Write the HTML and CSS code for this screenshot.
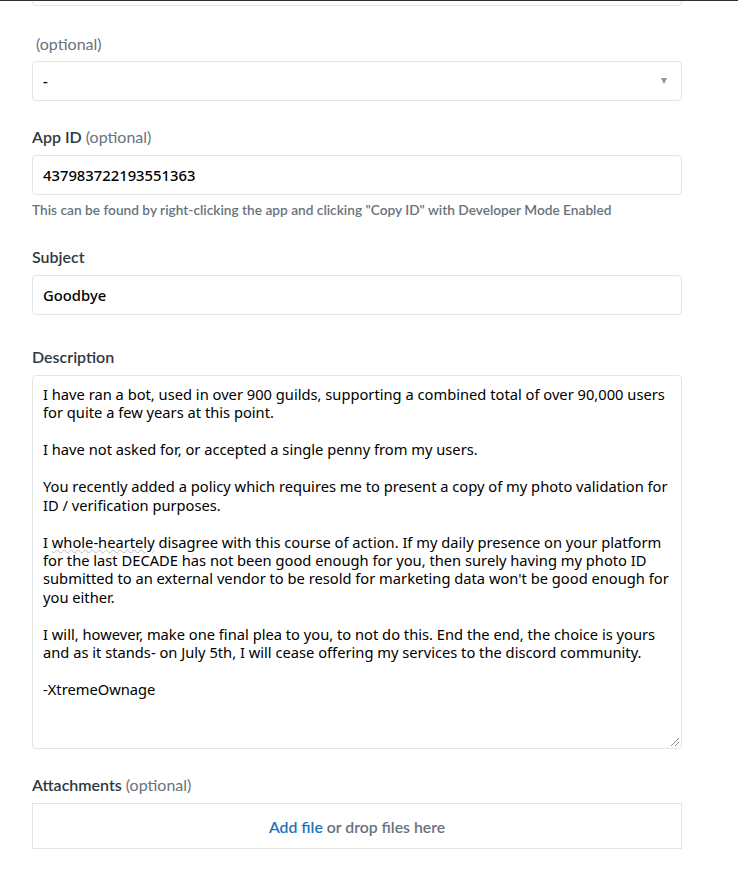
FILE: index.html
```html
<!DOCTYPE html>
<html>
<head>
<meta charset="utf-8">
<link rel="stylesheet" href="styles.css">
</head>
<body>
<div class="topline"></div>
<form class="form">
  <div class="input partial"></div>

  <label class="label first">&nbsp;<span class="opt">(optional)</span></label>
  <div class="input select">
    <span class="value">-</span>
    <span class="caret"></span>
  </div>

  <label class="label">App ID <span class="opt">(optional)</span></label>
  <div class="input"><span class="value">437983722193551363</span></div>
  <p class="hint">This can be found by right-clicking the app and clicking "Copy ID" with Developer Mode Enabled</p>

  <label class="label after-hint">Subject</label>
  <div class="input"><span class="value">Goodbye</span></div>

  <label class="label desc-label">Description</label>
  <div class="textarea">
    <div class="text">I have ran a bot, used in over 900 guilds, supporting a combined total of over 90,000 users
for quite a few years at this point.

I have not asked for, or accepted a single penny from my users.

You recently added a policy which requires me to present a copy of my photo validation for
ID / verification purposes.

I <span class="spell">whole-heartely</span> disagree with this course of action. If my daily presence on your platform
for the last DECADE has not been good enough for you, then surely having my photo ID
submitted to an external vendor to be resold for marketing data won't be good enough for
you either.

I will, however, make one final plea to you, to not do this. End the end, the choice is yours
and as it stands- on July 5th, I will cease offering my services to the discord community.

-XtremeOwnage</div>
    <span class="grip"></span>
  </div>

  <label class="label att-label">Attachments <span class="opt">(optional)</span></label>
  <div class="drop"><span class="add">Add file</span> or drop files here</div>
</form>
</body>
</html>
```

FILE: styles.css
```css
html, body {
  margin: 0;
  padding: 0;
  background: #ffffff;
}
body {
  font-family: Lato, "Noto Sans", sans-serif;
  color: #2f3941;
  overflow: hidden;
  height: 880px;
}
.topline {
  position: fixed;
  top: 0;
  left: 0;
  right: 0;
  height: 1px;
  background: #2f2f2f;
  z-index: 5;
}
.form {
  display: flex;
  flex-direction: column;
  width: 650px;
  margin: 0 0 0 32px;
}
.input {
  box-sizing: border-box;
  height: 40px;
  border: 1px solid #e2e5e7;
  border-radius: 4px;
  display: flex;
  align-items: center;
  padding: 0 10px;
  font-family: "Noto Sans", sans-serif;
  font-size: 14.8px;
  font-weight: 500;
  color: #000;
}
.partial {
  margin-top: -34px;
}
.label {
  display: block;
  font-size: 16px;
  line-height: 20px;
  font-weight: 600;
  color: #2f3941;
  margin-top: 26px;
  margin-bottom: 8px;
}
.label.first {
  margin-top: 28px;
  margin-bottom: 7px;
}
.opt {
  font-weight: 400;
  color: #68737d;
}
.select {
  justify-content: space-between;
}
.caret {
  width: 0;
  height: 0;
  border-left: 3.5px solid transparent;
  border-right: 3.5px solid transparent;
  border-top: 6px solid #8c96a0;
  margin-right: 4px;
}
.hint {
  margin: 6px 0 0;
  font-size: 13.7px;
  line-height: 18px;
  color: #68737d;
  font-weight: 600;
}
.label.after-hint {
  margin-top: 28px;
}
.label.desc-label {
  margin-top: 32px;
}
.textarea {
  position: relative;
  box-sizing: border-box;
  height: 374px;
  border: 1px solid #e2e5e7;
  border-radius: 4px;
  padding: 9px 10px 10px;
}
.text {
  white-space: pre;
  font-family: "Noto Sans", sans-serif;
  font-size: 14.7px;
  line-height: 18.44px;
  color: #000;
}
.spell {
  text-decoration: underline wavy #b9bec3;
  text-decoration-thickness: 1px;
  text-underline-offset: 1px;
}
.grip {
  position: absolute;
  right: 2px;
  bottom: 2px;
  width: 8px;
  height: 8px;
  background:
    linear-gradient(135deg, transparent 45%, #8a8a8a 45%, #8a8a8a 55%, transparent 55%, transparent 70%, #8a8a8a 70%, #8a8a8a 80%, transparent 80%);
}
.label.att-label {
  margin-top: 26px;
}
.drop {
  box-sizing: border-box;
  height: 46px;
  border: 1px solid #e2e5e7;
  display: flex;
  align-items: center;
  justify-content: center;
  font-size: 15.8px;
  font-weight: 600;
  color: #68737d;
}
.add {
  color: #1f73b7;
  margin-right: 4px;
}
```
